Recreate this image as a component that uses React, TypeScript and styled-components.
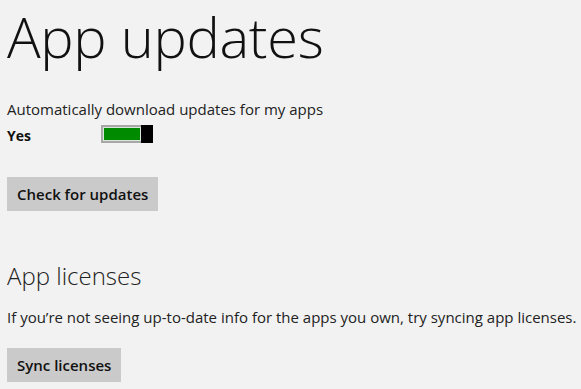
import * as React from "react";
import styled, { createGlobalStyle } from "styled-components";

const GlobalStyle = createGlobalStyle`
  html, body {
    margin: 0;
    padding: 0;
    background: #f2f2f2;
  }
  body {
    font-family: "Open Sans", "Liberation Sans", sans-serif;
    color: #1a1a1a;
  }
`;

const Page = styled.div`
  display: flex;
  flex-direction: column;
  align-items: flex-start;
  padding: 0 0 0 7px;
  height: 389px;
  overflow: hidden;
`;

const Title = styled.h1`
  margin: 0;
  font-size: 56px;
  font-weight: 300;
  line-height: 72px;
  letter-spacing: -0.3px;
  color: #111;
`;

const SubTitle = styled.h2<{ $mt: number }>`
  margin: ${(p) => p.$mt}px 0 0;
  font-size: 24px;
  font-weight: 300;
  line-height: 34px;
  color: #222;
`;

const Label = styled.div<{ $mt: number }>`
  margin-top: ${(p) => p.$mt}px;
  font-size: 15px;
  line-height: 20px;
  color: #222;
  white-space: nowrap;
`;

const ToggleRow = styled.div`
  display: flex;
  align-items: flex-start;
  margin-top: 6px;
`;

const Value = styled.span`
  width: 94px;
  padding-top: 2px;
  font-size: 14px;
  font-weight: 700;
  line-height: 18px;
  color: #111;
`;

const ToggleTrack = styled.div`
  display: flex;
  width: 52px;
  height: 18px;
`;

const ToggleFill = styled.div`
  flex: 1;
  border: 2px solid #a8a8a8;
  border-right: none;
  background: #008a00;
  box-shadow: inset 0 0 0 1px #d8e8d8;
`;

const ToggleThumb = styled.div`
  width: 12px;
  background: #000;
`;

const Button = styled.button<{ $mt: number }>`
  margin-top: ${(p) => p.$mt}px;
  height: 34px;
  padding: 0 10px;
  border: none;
  background: #cacaca;
  font-family: "Open Sans", "Liberation Sans", sans-serif;
  font-size: 15px;
  font-weight: 600;
  color: #111;
`;

export default function App() {
  return (
    <>
      <GlobalStyle />
      <Page>
        <Title>App updates</Title>
        <Label $mt={27}>Automatically download updates for my apps</Label>
        <ToggleRow>
          <Value>Yes</Value>
          <ToggleTrack>
            <ToggleFill />
            <ToggleThumb />
          </ToggleTrack>
        </ToggleRow>
        <Button $mt={32}>Check for updates</Button>
        <SubTitle $mt={48}>App licenses</SubTitle>
        <Label $mt={14}>
          If you’re not seeing up-to-date info for the apps you own, try syncing app licenses.
        </Label>
        <Button $mt={21}>Sync licenses</Button>
      </Page>
    </>
  );
}
